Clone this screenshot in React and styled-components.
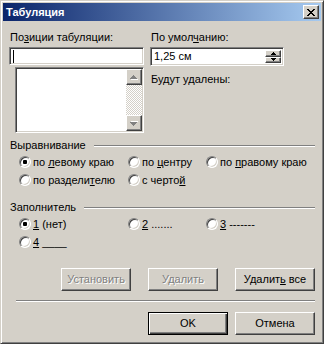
import React from "react";
import styled, { createGlobalStyle, css } from "styled-components";

const face = "#d4d0c8";

const GlobalStyle = createGlobalStyle`
  html, body {
    margin: 0;
    padding: 0;
    background: ${face};
  }
  body {
    font-family: "Liberation Sans", Arial, sans-serif;
    font-size: 11px;
    color: #000;
  }
  * {
    box-sizing: border-box;
  }
`;

const raised = css`
  border: 1px solid;
  border-color: #fff #404040 #404040 #fff;
  box-shadow: inset -1px -1px #808080, inset 1px 1px ${face};
`;

const sunken = css`
  border: 1px solid;
  border-color: #808080 #fff #fff #808080;
  box-shadow: inset 1px 1px #404040, inset -1px -1px ${face};
`;

const Window = styled.div`
  width: 324px;
  height: 344px;
  background: ${face};
  border: 1px solid;
  border-color: ${face} #404040 #404040 ${face};
  box-shadow: inset 1px 1px #fff, inset -1px -1px #808080;
  padding: 2px;
  display: flex;
  flex-direction: column;
`;

const TitleBar = styled.div`
  height: 18px;
  flex: none;
  display: flex;
  align-items: center;
  padding: 0 2px 0 3px;
  background: linear-gradient(to right, #0a246a, #a6caf0);
`;

const Title = styled.span`
  color: #fff;
  font-weight: bold;
  font-size: 11px;
  line-height: 13px;
`;

const CloseButton = styled.div`
  margin-left: auto;
  width: 16px;
  height: 14px;
  background: ${face};
  ${raised};
  display: flex;
  align-items: center;
  justify-content: center;
  padding-right: 1px;
`;

const Body = styled.div`
  flex: 1;
  padding: 10px 6px 0 6px;
  display: flex;
  flex-direction: column;
`;

const TopRow = styled.div`
  display: flex;
  gap: 6px;
`;

const Column = styled.div`
  width: ${(p) => p.$w}px;
  display: flex;
  flex-direction: column;
`;

const Label = styled.div`
  height: 13px;
  line-height: 13px;
  padding-left: 1px;
  margin-top: ${(p) => p.$mt || 0}px;
  white-space: nowrap;
`;

const TextBox = styled.div`
  margin-top: 3px;
  height: 18px;
  background: #fff;
  ${sunken};
  display: flex;
  align-items: center;
  padding-left: 3px;
`;

const Caret = styled.span`
  width: 1px;
  height: 13px;
  background: #000;
`;

const ListBox = styled.div`
  margin-top: 2px;
  margin-left: 6px;
  width: 129px;
  height: 66px;
  background: #fff;
  ${sunken};
  padding: 1px;
  display: flex;
  justify-content: flex-end;
`;

const ScrollBar = styled.div`
  width: 16px;
  display: flex;
  flex-direction: column;
`;

const ScrollButton = styled.div`
  width: 16px;
  height: 16px;
  background: ${face};
  ${raised};
  display: flex;
  align-items: center;
  justify-content: center;
`;

const ScrollTrack = styled.div`
  flex: 1;
  background: repeating-conic-gradient(${face} 0 25%, #fff 0 50%) 0 0 / 2px 2px;
`;

const Spinner = styled.div`
  margin-top: 3px;
  height: 19px;
  background: #fff;
  ${sunken};
  padding: 2px;
  display: flex;
  align-items: center;
`;

const SpinValue = styled.span`
  flex: 1;
  padding-left: 1px;
  line-height: 13px;
`;

const SpinButtons = styled.div`
  width: 16px;
  height: 100%;
  display: flex;
  flex-direction: column;
`;

const SpinButton = styled.div`
  flex: 1;
  background: ${face};
  ${raised};
  display: flex;
  align-items: center;
  justify-content: center;
`;

const Group = styled.div`
  margin-top: ${(p) => p.$mt}px;
`;

const GroupHeader = styled.div`
  display: flex;
  align-items: center;
  height: 13px;
  line-height: 13px;
  padding-left: 1px;
`;

const GroupLine = styled.div`
  flex: 1;
  margin-left: 8px;
  height: 2px;
  border-top: 1px solid #808080;
  border-bottom: 1px solid #fff;
`;

const RadioGrid = styled.div`
  margin-top: 1px;
  padding-left: 10px;
  display: grid;
  grid-template-columns: 109px 78px 1fr;
  grid-auto-rows: 18px;
`;

const RadioItem = styled.label`
  display: flex;
  align-items: center;
  gap: 2px;
  white-space: nowrap;
`;

const RadioCircle = styled.span`
  width: 12px;
  height: 12px;
  flex: none;
  border-radius: 50%;
  background: #fff;
  border: 1px solid;
  border-color: #808080 #fff #fff #808080;
  box-shadow: inset 1px 1px #404040, inset -1px -1px ${face};
  display: flex;
  align-items: center;
  justify-content: center;
  &::after {
    content: "";
    width: 4px;
    height: 4px;
    border-radius: 1px;
    background: ${(p) => (p.$checked ? "#000" : "transparent")};
  }
`;

const ButtonRow = styled.div`
  margin-top: ${(p) => p.$mt}px;
  display: flex;
  justify-content: flex-end;
  gap: ${(p) => p.$gap}px;
`;

const Button = styled.div`
  width: ${(p) => p.$w}px;
  height: 23px;
  background: ${face};
  display: flex;
  align-items: center;
  justify-content: center;
  line-height: 13px;
  white-space: nowrap;
  ${(p) =>
    p.$default
      ? css`
          border: 1px solid #000;
          box-shadow: inset 1px 1px #fff, inset -1px -1px #404040,
            inset -2px -2px #808080;
        `
      : raised};
  color: ${(p) => (p.$disabled ? "#808080" : "#000")};
  text-shadow: ${(p) => (p.$disabled ? "1px 1px #fff" : "none")};
`;

const Separator = styled.div`
  margin-top: 9px;
  margin-left: 7px;
  height: 2px;
  border-top: 1px solid #808080;
  border-bottom: 1px solid #fff;
`;

const CloseGlyph = () => (
  <svg width="8" height="7" viewBox="0 0 8 7" shapeRendering="crispEdges">
    <path
      d="M0 0h2v1h-2zM6 0h2v1h-2zM1 1h2v1h-2zM5 1h2v1h-2zM2 2h4v1h-4zM3 3h2v1h-2zM2 4h4v1h-4zM1 5h2v1h-2zM5 5h2v1h-2zM0 6h2v1h-2zM6 6h2v1h-2z"
      fill="#000"
    />
  </svg>
);

const ScrollArrow = ({ down }) => (
  <svg
    width="8"
    height="5"
    viewBox="0 0 8 5"
    shapeRendering="crispEdges"
    style={down ? { transform: "scaleY(-1)" } : undefined}
  >
    <path d="M4 1h1v1h-1zM3 2h3v1h-3zM2 3h5v1h-5zM1 4h7v1h-7z" fill="#fff" />
    <path d="M3 0h1v1h-1zM2 1h3v1h-3zM1 2h5v1h-5zM0 3h7v1h-7z" fill="#808080" />
  </svg>
);

const SpinArrow = ({ down }) => (
  <svg
    width="5"
    height="3"
    viewBox="0 0 5 3"
    shapeRendering="crispEdges"
    style={down ? { transform: "scaleY(-1)" } : undefined}
  >
    <path d="M2 0h1v1h-1zM1 1h3v1h-3zM0 2h5v1h-5z" fill="#000" />
  </svg>
);

function Radio({ checked, children }) {
  return (
    <RadioItem>
      <RadioCircle $checked={checked} />
      <span>{children}</span>
    </RadioItem>
  );
}

export default function App() {
  return (
    <>
      <GlobalStyle />
      <Window>
        <TitleBar>
          <Title>Табуляция</Title>
          <CloseButton>
            <CloseGlyph />
          </CloseButton>
        </TitleBar>
        <Body>
          <TopRow>
            <Column $w={135}>
              <Label>
                По<u>з</u>иции табуляции:
              </Label>
              <TextBox>
                <Caret />
              </TextBox>
              <ListBox>
                <ScrollBar>
                  <ScrollButton>
                    <ScrollArrow />
                  </ScrollButton>
                  <ScrollTrack />
                  <ScrollButton>
                    <ScrollArrow down />
                  </ScrollButton>
                </ScrollBar>
              </ListBox>
            </Column>
            <Column $w={134}>
              <Label>
                По умол<u>ч</u>анию:
              </Label>
              <Spinner>
                <SpinValue>1,25 см</SpinValue>
                <SpinButtons>
                  <SpinButton>
                    <SpinArrow />
                  </SpinButton>
                  <SpinButton>
                    <SpinArrow down />
                  </SpinButton>
                </SpinButtons>
              </Spinner>
              <Label $mt={7}>Будут удалены:</Label>
            </Column>
          </TopRow>

          <Group $mt={6}>
            <GroupHeader>
              <span>Выравнивание</span>
              <GroupLine />
            </GroupHeader>
            <RadioGrid>
              <Radio checked>
                по <u>л</u>евому краю
              </Radio>
              <Radio>
                по <u>ц</u>ентру
              </Radio>
              <Radio>
                по <u>п</u>равому краю
              </Radio>
              <Radio>
                по раздели<u>т</u>елю
              </Radio>
              <Radio>
                с черто<u>й</u>
              </Radio>
            </RadioGrid>
          </Group>

          <Group $mt={12}>
            <GroupHeader>
              <span>Заполнитель</span>
              <GroupLine />
            </GroupHeader>
            <RadioGrid>
              <Radio checked>
                <u>1</u> (нет)
              </Radio>
              <Radio>
                <u>2</u> .......
              </Radio>
              <Radio>
                <u>3</u> -------
              </Radio>
              <Radio>
                <u>4</u> ____
              </Radio>
            </RadioGrid>
          </Group>

          <ButtonRow $mt={17} $gap={17}>
            <Button $w={70} $disabled>
              <span>Установить</span>
            </Button>
            <Button $w={70} $disabled>
              <span>Удалить</span>
            </Button>
            <Button $w={80}>
              <span>
                Удалит<u>ь</u> все
              </span>
            </Button>
          </ButtonRow>
          <Separator />
          <ButtonRow $mt={10} $gap={7}>
            <Button $w={80} $default>
              <span>OK</span>
            </Button>
            <Button $w={80}>
              <span>Отмена</span>
            </Button>
          </ButtonRow>
        </Body>
      </Window>
    </>
  );
}
